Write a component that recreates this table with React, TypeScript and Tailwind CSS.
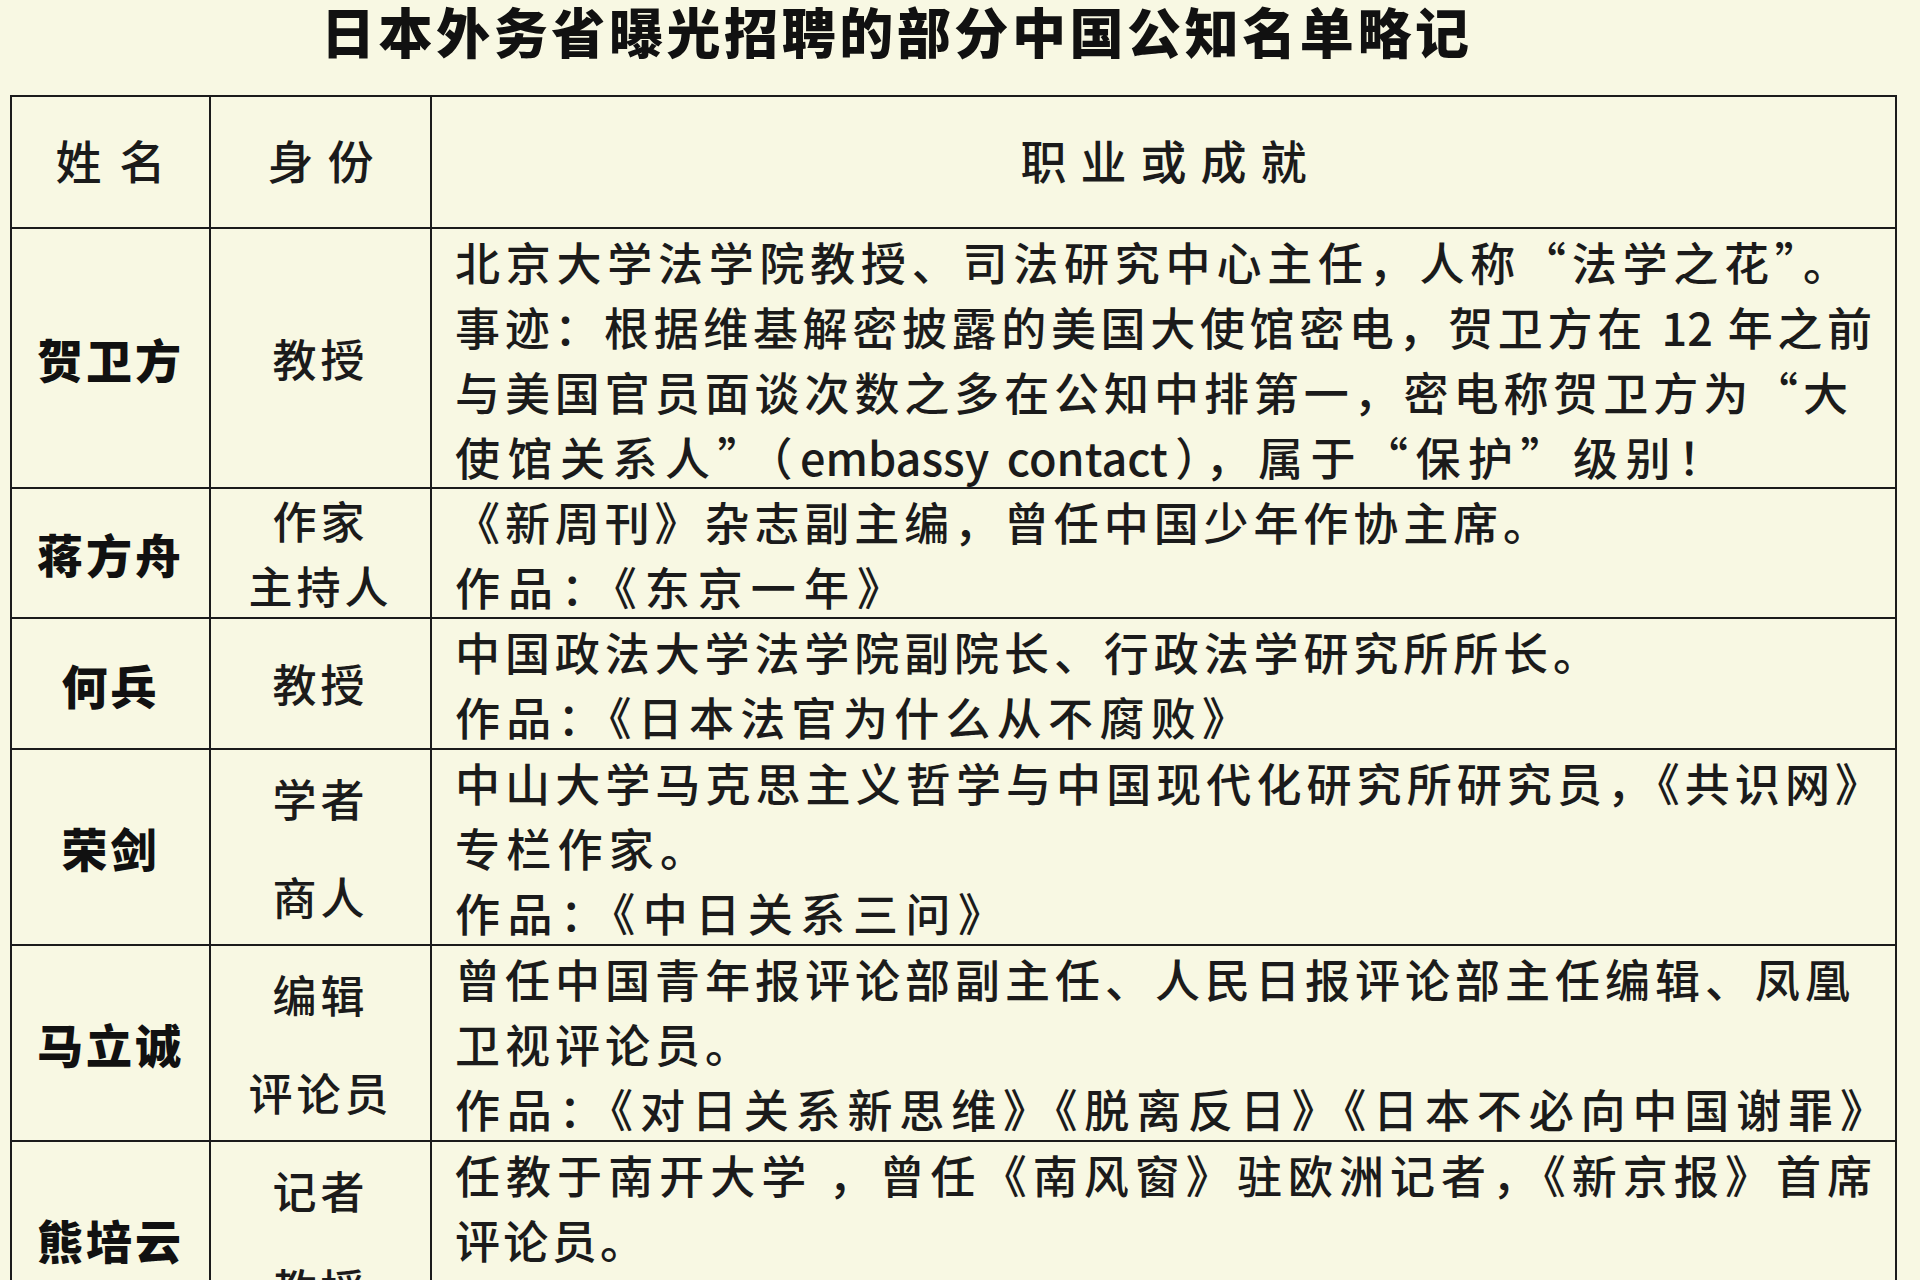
import React from "react";

type Line = { text: string; w: number };

type Person = {
    name: string;
    h: string;
    roles: string[];
    roleGap: string;
    lines: Line[];
};

const people: Person[] = [
    {
        name: "贺卫方",
        h: "h-[260px]",
        roles: ["教授"],
        roleGap: "gap-0",
        lines: [
            { text: "北京大学法学院教授、司法研究中心主任，人称“法学之花”。", w: 1393 },
            { text: "事迹：根据维基解密披露的美国大使馆密电，贺卫方在 12 年之前", w: 1417 },
            { text: "与美国官员面谈次数之多在公知中排第一，密电称贺卫方为“大", w: 1393 },
            { text: "使馆关系人”（embassy contact），属于“保护”级别！", w: 1268 },
        ],
    },
    {
        name: "蒋方舟",
        h: "h-[130px]",
        roles: ["作家", "主持人"],
        roleGap: "gap-0",
        lines: [
            { text: "《新周刊》杂志副主编，曾任中国少年作协主席。", w: 1093 },
            { text: "作品：《东京一年》", w: 447 },
        ],
    },
    {
        name: "何兵",
        h: "h-[131px]",
        roles: ["教授"],
        roleGap: "gap-0",
        lines: [
            { text: "中国政法大学法学院副院长、行政法学研究所所长。", w: 1143 },
            { text: "作品：《日本法官为什么从不腐败》", w: 792 },
        ],
    },
    {
        name: "荣剑",
        h: "h-[196px]",
        roles: ["学者", "商人"],
        roleGap: "gap-[33px]",
        lines: [
            { text: "中山大学马克思主义哲学与中国现代化研究所研究员，《共识网》", w: 1425 },
            { text: "专栏作家。", w: 250 },
            { text: "作品：《中日关系三问》", w: 548 },
        ],
    },
    {
        name: "马立诚",
        h: "h-[196px]",
        roles: ["编辑", "评论员"],
        roleGap: "gap-[33px]",
        lines: [
            { text: "曾任中国青年报评论部副主任、人民日报评论部主任编辑、凤凰", w: 1395 },
            { text: "卫视评论员。", w: 295 },
            { text: "作品：《对日关系新思维》《脱离反日》《日本不必向中国谢罪》", w: 1430 },
        ],
    },
    {
        name: "熊培云",
        h: "h-[196px]",
        roles: ["记者", "教授"],
        roleGap: "gap-[33px]",
        lines: [
            { text: "任教于南开大学 ，曾任《南风窗》驻欧洲记者，《新京报》首席", w: 1417 },
            { text: "评论员。", w: 190 },
        ],
    },
];

const cell = "border-r-2 border-b-2 border-[#1b1b1b]";

function PersonRow({ p }: { p: Person }) {
    return (
        <>
            <div className={`${cell} ${p.h} flex items-center justify-center`}>
                <span className="text-[46px] font-extrabold tracking-[3px] leading-[70px] text-[#111]">{p.name}</span>
            </div>
            <div className={`${cell} ${p.h} flex flex-col items-center justify-center ${p.roleGap}`}>
                {p.roles.map((r) => (
                    <div key={r} className="text-[44px] font-medium leading-[65px] tracking-[4px]">
                        {r}
                    </div>
                ))}
            </div>
            <div className={`${cell} ${p.h} pl-[23px] overflow-hidden`}>
                {p.lines.map((l, i) => (
                    <div
                        key={i}
                        className="text-[45px] font-medium leading-[65px] text-justify [text-align-last:justify]"
                        style={{ width: l.w }}
                    >
                        {l.text}
                    </div>
                ))}
            </div>
        </>
    );
}

export default function App() {
    return (
        <div className="w-[1920px] h-[1280px] overflow-hidden bg-[#f8f8e3] text-[#1b1b1b] font-['Noto_Sans_CJK_SC',sans-serif]">
            <div className="h-[95px] pl-[321px] flex flex-col">
                <h1 className="w-[1148px] text-[54px] font-black leading-[62px] text-justify [text-align-last:justify] text-[#111]">
                    日本外务省曝光招聘的部分中国公知名单略记
                </h1>
            </div>

            <div className="ml-[10px] w-[1887px] border-l-2 border-t-2 border-[#1b1b1b] grid grid-cols-[199px_221px_1fr]">
                {/* header */}
                <div className={`${cell} h-[132px] flex items-center justify-center pb-[6px]`}>
                    <span className="text-[46px] font-medium tracking-[18px] pl-[18px]">姓名</span>
                </div>
                <div className={`${cell} h-[132px] flex items-center justify-center pb-[6px]`}>
                    <span className="text-[46px] font-medium tracking-[14px] pl-[14px]">身份</span>
                </div>
                <div className={`${cell} h-[132px] flex items-center justify-center pb-[6px]`}>
                    <span className="text-[46px] font-medium tracking-[14px] pl-[14px]">职业或成就</span>
                </div>

                {people.map((p) => (
                    <PersonRow key={p.name} p={p} />
                ))}
            </div>
        </div>
    );
}
